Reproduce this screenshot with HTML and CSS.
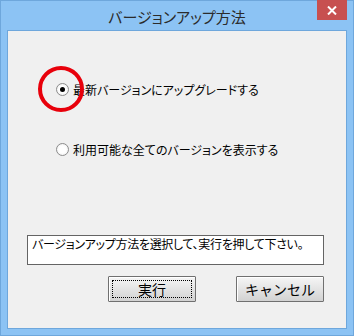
FILE: index.html
```html
<!DOCTYPE html>
<html lang="ja">
<head>
    <meta charset="UTF-8">
    <title>バージョンアップ方法</title>
    <link rel="stylesheet" href="styles.css">
</head>
<body>
    <div class="window">
        <div class="titlebar">
            <span></span>
            <span class="title">バージョンアップ方法</span>
            <button class="close" aria-label="閉じる">
                <svg width="10" height="9" viewBox="0 0 10 9">
                    <path d="M1 0.5 L9 8.5 M9 0.5 L1 8.5" stroke="#fff" stroke-width="2" fill="none"/>
                </svg>
            </button>
        </div>

        <div class="client">
            <div class="options">
                <label class="option">
                    <input type="radio" name="method" value="latest" checked>
                    <span>最新バージョンにアップグレードする</span>
                    <span class="mark"></span>
                </label>
                <label class="option">
                    <input type="radio" name="method" value="list">
                    <span>利用可能な全てのバージョンを表示する</span>
                </label>
            </div>

            <div class="status">バージョンアップ方法を選択して、実行を押して下さい。</div>

            <div class="actions">
                <button class="btn default">実行</button>
                <button class="btn">キャンセル</button>
            </div>
        </div>
    </div>
</body>
</html>
```

FILE: styles.css
```css
* {
    box-sizing: border-box;
}

body {
    margin: 0;
    font-family: "Noto Sans CJK JP", "Liberation Sans", sans-serif;
    font-size: 12px;
    color: #000;
}

.window {
    width: 354px;
    height: 336px;
    background: #8cc3f4;
    border: 1px solid #6ea7dc;
    display: flex;
    flex-direction: column;
}

.titlebar {
    height: 29px;
    display: grid;
    grid-template-columns: 1fr auto 1fr;
    align-items: start;
}

.title {
    font-size: 15px;
    line-height: 15px;
    margin-top: 8px;
    color: #2b2b2b;
    font-feature-settings: "palt";
}

.close {
    justify-self: end;
    width: 30px;
    height: 20px;
    margin: -1px 6px 0 0;
    padding: 0;
    border: none;
    background: #c75050;
    display: flex;
    align-items: center;
    justify-content: center;
}

.client {
    margin: 0 6px 0 6px;
    height: 299px;
    background: #f0f0f0;
    border: 1px solid #6ea7dc;
    padding: 0 22px 0 19px;
}

.options {
    padding-top: 50px;
    height: 204px;
    display: flex;
    flex-direction: column;
    gap: 44px;
}

.option {
    position: relative;
    display: flex;
    align-items: center;
    height: 16px;
    padding-left: 29px;
    gap: 4px;
    font-feature-settings: "palt";
}

.option input {
    appearance: none;
    margin: 0;
    width: 13px;
    height: 13px;
    border-radius: 50%;
    border: 1px solid #8c8c8c;
    background: radial-gradient(circle, #fff 45%, #e6e6e6 100%);
    display: grid;
    place-items: center;
}

.option input:checked::after {
    content: "";
    width: 5px;
    height: 5px;
    border-radius: 50%;
    background: #000;
}

.mark {
    position: absolute;
    left: 11px;
    top: -15px;
    width: 46px;
    height: 46px;
    border: 4px solid #e8000b;
    border-radius: 50%;
}

.status {
    height: 30px;
    background: #fff;
    border: 1px solid #646464;
    padding: 1px 4px;
    line-height: 14px;
    letter-spacing: -0.3px;
    font-feature-settings: "palt";
}

.actions {
    display: flex;
    justify-content: flex-end;
    gap: 40px;
    margin-top: 11px;
}

.btn {
    width: 88px;
    height: 26px;
    padding: 0;
    font-family: inherit;
    font-size: 14px;
    color: #000;
    border: 1px solid #707070;
    border-radius: 1px;
    background: linear-gradient(#f6f6f6, #d2d2d2);
    box-shadow: inset 1px 1px 0 #fff;
}

.btn.default {
    outline: 1px dotted #000;
    outline-offset: -5px;
}
```
